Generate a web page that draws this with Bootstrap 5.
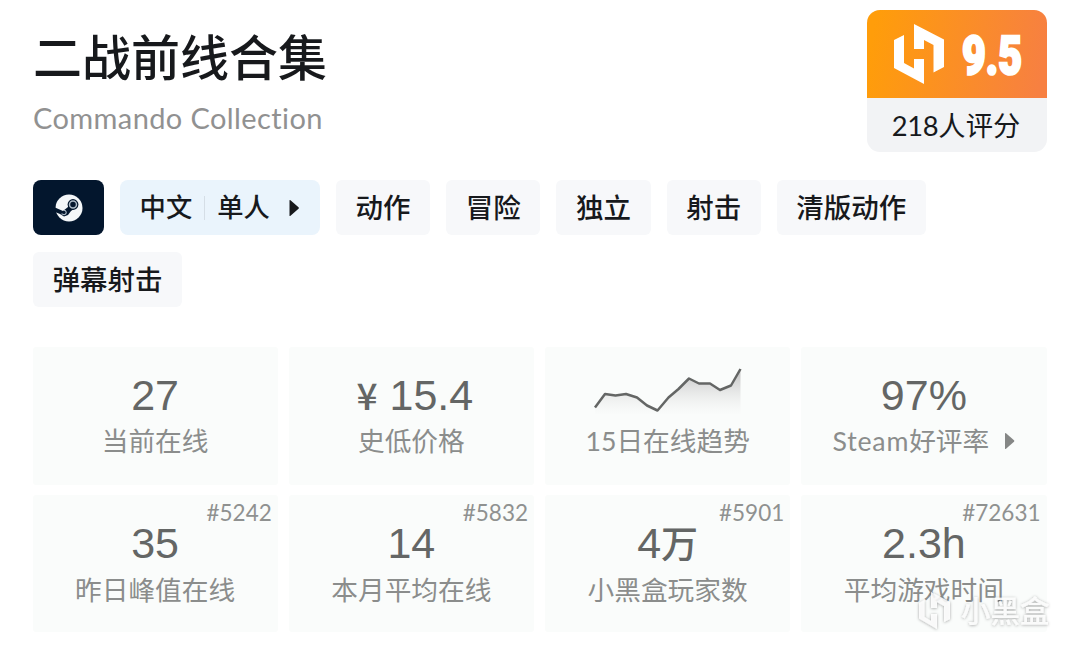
<!DOCTYPE html>
<html lang="zh-CN">
  <head>
    <meta charset="UTF-8" />
    <meta name="viewport" content="width=device-width, initial-scale=1" />
    <title>二战前线合集 - 小黑盒</title>
    <link
      href="https://cdn.jsdelivr.net/npm/bootstrap@5.3.0/dist/css/bootstrap.min.css"
      rel="stylesheet"
    />
    <style>
      body {
        font-family: Lato, "Noto Sans CJK SC", sans-serif;
        color: #17191c;
        background: #fff;
        overflow: hidden;
      }
      .game-page {
        position: relative;
        width: 1080px;
        height: 648px;
        padding: 10px 33px 0;
      }
      .game-head {
        height: 170px;
      }
      .game-title {
        font-size: 49px;
        line-height: 60px;
        font-weight: 500;
        margin: 17px 0 0;
      }
      .game-subtitle {
        font-size: 29px;
        line-height: 40px;
        letter-spacing: 0.4px;
        color: #919191;
        margin: 11px 0 0;
      }
      .score-box {
        width: 180px;
        height: 142px;
        border-radius: 13px;
        background: #f2f3f5;
      }
      .score-top {
        height: 88px;
        background: linear-gradient(100deg, #ff9d0a 5%, #f78041 95%);
      }
      .score-count {
        height: 54px;
        line-height: 55px;
        padding-right: 2px;
        font-size: 27.3px;
      }
      .score-count .num {
        letter-spacing: -0.3px;
      }
      .tag-list {
        column-gap: 16px;
        row-gap: 17px;
      }
      .tag {
        height: 55px;
        line-height: 55px;
        padding: 0 19.6px;
        border-radius: 6px;
        background: #f7f8fa;
        font-size: 27.5px;
        font-weight: 500;
      }
      .tag-steam {
        width: 71px;
        background: #03162d;
        border-radius: 8px;
      }
      .tag-info {
        width: 200px;
        background: #eaf4fc;
        font-size: 26.3px;
        border-radius: 8px;
      }
      .tag-info .split {
        width: 1px;
        height: 24px;
        background: #d5dee6;
        margin: 0 12px;
      }
      .stat-grid {
        display: grid;
        grid-template-columns: repeat(4, 1fr);
        gap: 10px 11px;
        margin: 40px 0.5px 0 -0.5px;
      }
      .stat {
        position: relative;
        height: 137.5px;
        padding-top: 23px;
        background: #fafcfb;
        border-radius: 3px;
        text-align: center;
      }
      .stat-value {
        font-family: "Liberation Sans", "Noto Sans CJK SC", sans-serif;
        font-size: 43px;
        line-height: 50px;
        height: 50px;
        color: #646665;
      }
      .stat-value .unit {
        font-size: 37px;
        line-height: 1;
        font-family: "Noto Sans CJK SC", sans-serif;
        font-weight: 500;
      }
      .stat-price {
        padding-left: 7px;
      }
      .stat-label {
        font-size: 26.7px;
        line-height: 40px;
        height: 40px;
        padding-top: 1px;
        color: #8b8d8c;
      }
      .stat-label .latin {
        letter-spacing: 0.8px;
      }
      .stat-ranked .stat-label {
        padding-top: 2px;
      }
      .stat-rank {
        position: absolute;
        top: 3px;
        right: 6px;
        font-size: 22.5px;
        line-height: 30px;
        color: #8f9190;
      }
      .watermark {
        position: absolute;
        left: 916px;
        top: 588px;
      }
    </style>
  </head>
  <body>
    <main class="game-page">
      <header class="game-head d-flex justify-content-between align-items-start">
        <div>
          <h1 class="game-title">二战前线合集</h1>
          <p class="game-subtitle">Commando Collection</p>
        </div>
        <div class="score-box overflow-hidden text-center">
          <div class="score-top">
            <svg class="d-block" width="180" height="88" viewBox="0 0 180 88">
              <g fill="#fff">
                <path d="M27 30L37 25V53L47 58.500V49H57V74L27 58Z" />
                <path d="M47 14L77 29.500V57L66.500 62.500V35L57 30V39H47Z" />
              </g>
              <text x="95" y="63.500" textLength="60" lengthAdjust="spacingAndGlyphs" font-family="Roboto, sans-serif" font-size="54" font-weight="900" fill="#fff" stroke="#fff" stroke-width="2.600">9.5</text>
            </svg>
          </div>
          <div class="score-count"><span class="num">218</span>人评分</div>
        </div>
      </header>

      <section class="tag-list d-flex flex-wrap">
        <div class="tag tag-steam d-flex justify-content-center align-items-center p-0">
          <svg width="28" height="28" viewBox="0 0 28 28">
            <circle cx="14" cy="14" r="13.500" fill="#f4f7f9" />
            <path d="M0 13.500L8 17L13 13L15 9L21 13.500L16 17L13 21L9 22.500L5 20L0 18Z" fill="#03162d" />
            <circle cx="18" cy="10.500" r="5.400" fill="#03162d" />
            <circle cx="18" cy="10.500" r="3.500" fill="none" stroke="#aebbc7" stroke-width="1.500" />
            <path d="M6.500 19.800L9 20.800A2.300 2.300 0 0 0 10.500 16.800L9 16.200" fill="none" stroke="#aebbc7" stroke-width="1.100" />
          </svg>
        </div>
        <div class="tag tag-info d-flex align-items-center">
          <span>中文</span>
          <span class="split"></span>
          <span>单人</span>
          <svg class="ms-auto" width="12" height="18" viewBox="0 0 12 18">
            <path d="M1.500 1.500Q1.500 .5 2.500 1.200L10.500 8.200Q11.500 9 10.500 9.800L2.500 16.800Q1.500 17.500 1.500 16.500Z" fill="#17191c" />
          </svg>
        </div>
        <div class="tag">动作</div>
        <div class="tag">冒险</div>
        <div class="tag">独立</div>
        <div class="tag">射击</div>
        <div class="tag">清版动作</div>
        <div class="tag">弹幕射击</div>
      </section>

      <section class="stat-grid">
        <div class="stat">
          <div class="stat-value">27</div>
          <div class="stat-label">当前在线</div>
        </div>
        <div class="stat">
          <div class="stat-value stat-price"><span class="unit">¥</span> 15.4</div>
          <div class="stat-label">史低价格</div>
        </div>
        <div class="stat">
          <div class="stat-value">
            <svg class="d-block mx-auto overflow-visible" width="150" height="50" viewBox="0 0 150 50">
              <defs>
                <linearGradient id="trendFill" x1="0" y1="0" x2="0" y2="1">
                  <stop offset="0" stop-color="#b8b8b8" stop-opacity=".9" />
                  <stop offset="1" stop-color="#e8e8e8" stop-opacity=".05" />
                </linearGradient>
              </defs>
              <path d="M2 37.500L12 24L22.500 25.500L33 24L44 27.500L54 35.500L64.500 40.500L75.500 27.500L85.500 19L96 8.500L106 13.500L117 13.500L127 20L138 15.500L147.500 -1V44H2Z" fill="url(#trendFill)" />
              <path d="M2 37.500L12 24L22.500 25.500L33 24L44 27.500L54 35.500L64.500 40.500L75.500 27.500L85.500 19L96 8.500L106 13.500L117 13.500L127 20L138 15.500L147.500 -1" fill="none" stroke="#646665" stroke-width="2.500" stroke-linejoin="round" />
            </svg>
          </div>
          <div class="stat-label">15日在线趋势</div>
        </div>
        <div class="stat">
          <div class="stat-value">97%</div>
          <div class="stat-label d-flex justify-content-center align-items-center">
            <span><span class="latin">Steam</span>好评率</span>
            <svg class="ms-3" width="10" height="18" viewBox="0 0 10 18">
              <path d="M0 1.500Q0 .5 1 1.200L9 8.200Q9.800 9 9 9.800L1 16.800Q0 17.500 0 16.500Z" fill="#858786" />
            </svg>
          </div>
        </div>
        <div class="stat stat-ranked">
          <span class="stat-rank">#5242</span>
          <div class="stat-value">35</div>
          <div class="stat-label">昨日峰值在线</div>
        </div>
        <div class="stat stat-ranked">
          <span class="stat-rank">#5832</span>
          <div class="stat-value">14</div>
          <div class="stat-label">本月平均在线</div>
        </div>
        <div class="stat stat-ranked">
          <span class="stat-rank">#5901</span>
          <div class="stat-value">4<span class="unit">万</span></div>
          <div class="stat-label">小黑盒玩家数</div>
        </div>
        <div class="stat stat-ranked">
          <span class="stat-rank">#72631</span>
          <div class="stat-value">2.3h</div>
          <div class="stat-label">平均游戏时间</div>
        </div>
      </section>

      <svg class="watermark" width="140" height="46" viewBox="0 0 140 46">
        <defs>
          <filter id="markShadow" x="-10%" y="-20%" width="120%" height="140%">
            <feDropShadow dx="0" dy="0.500" stdDeviation="1.500" flood-color="#000" flood-opacity=".42" />
          </filter>
        </defs>
        <g fill="#fff" fill-opacity=".85" filter="url(#markShadow)">
          <path d="M3 15L8.500 12V29L15 33V26H21V41L3 30.500Z" />
          <path d="M15 4L34 14V31L28 34V18L21 14V20H15Z" />
          <text x="45" y="34" font-family="Noto Sans CJK SC, sans-serif" font-size="29.500" font-weight="500">小黑盒</text>
        </g>
      </svg>
    </main>

    <script src="https://cdn.jsdelivr.net/npm/bootstrap@5.3.0/dist/js/bootstrap.bundle.min.js"></script>
  </body>
</html>
